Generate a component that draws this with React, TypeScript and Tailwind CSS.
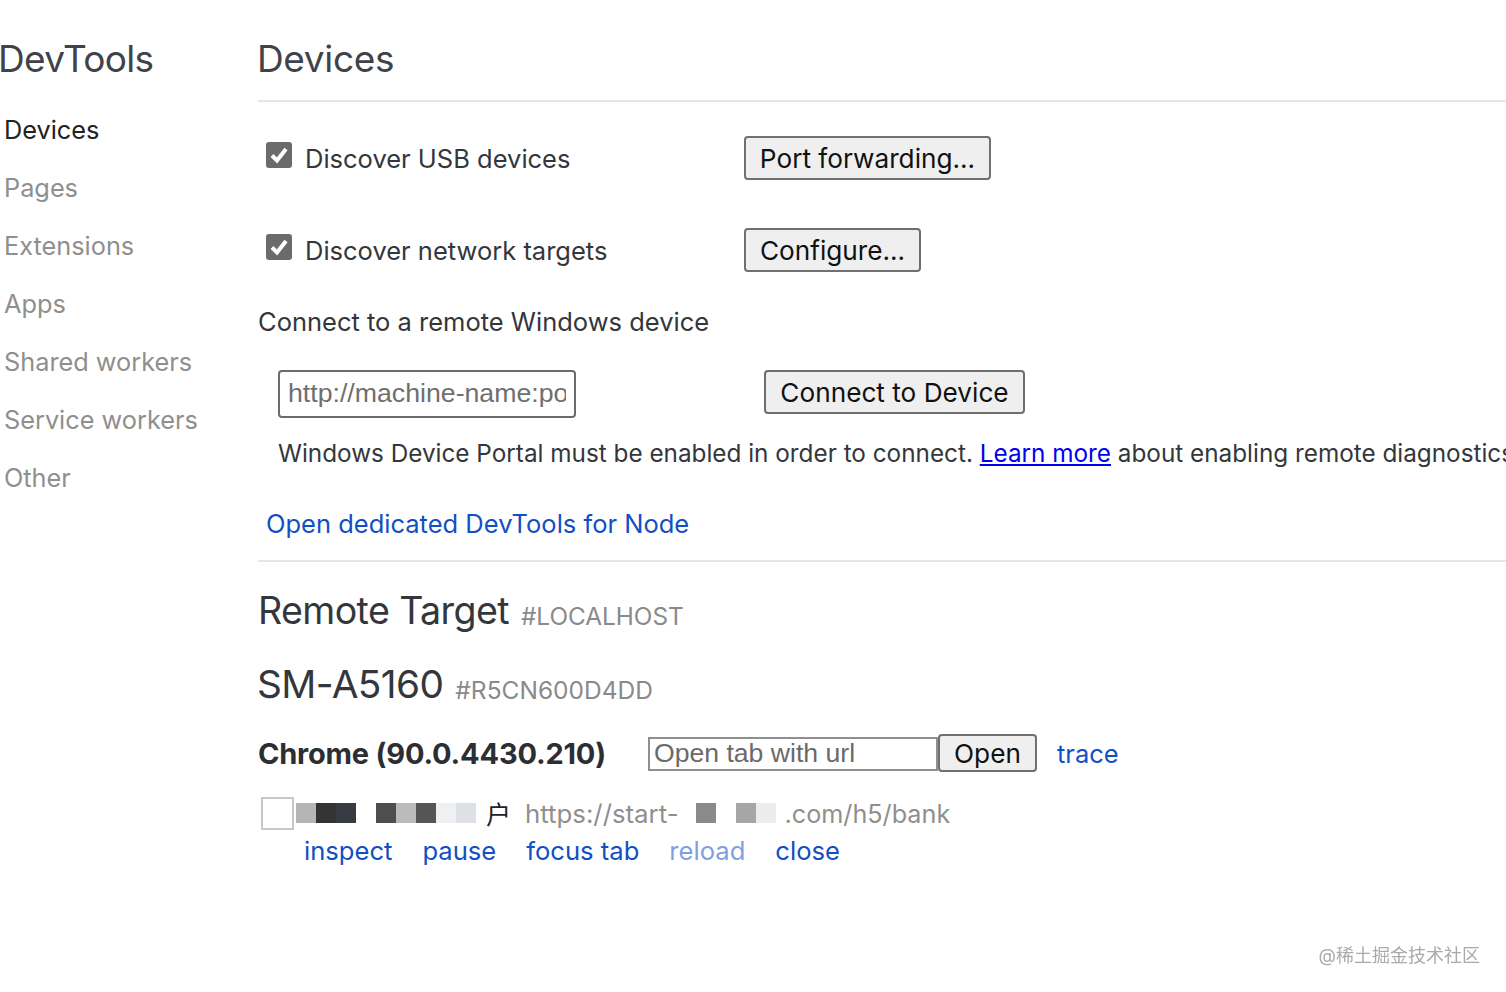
const font = "font-['Inter','Noto_Sans_CJK_SC',sans-serif]";

const navItems = ["Pages", "Extensions", "Apps", "Shared workers", "Service workers", "Other"];

function Sidebar() {
  return (
    <aside className="w-[258px] shrink-0">
      <h1 className="pt-[35px] h-[100px] text-[37px] leading-[48px] tracking-[-0.7px] text-[#3f4349] -ml-[2px]">DevTools</h1>
      <nav className="pl-[4px]">
        <div className="h-[58px] pt-[1px] text-[25.3px] leading-[58px] text-[#222]">Devices</div>
        {navItems.map((item) => (
          <div key={item} className="h-[58px] pt-[1px] text-[25.3px] leading-[58px] text-[#8f8f8f]">{item}</div>
        ))}
      </nav>
    </aside>
  );
}

function Button({ children, className }: { children: string; className: string }) {
  return (
    <button className={`h-[44px] pt-[3px] rounded-[4px] border-2 border-[#6f6f6f] bg-[#efefef] text-[26.2px] leading-none text-[#111] ${className}`}>
      {children}
    </button>
  );
}

function CheckRow({ label, button, btnWidth, className }: { label: string; button: string; btnWidth: string; className: string }) {
  return (
    <div className={`flex items-center ${className}`}>
      <div className="w-[486px] flex items-center pl-2">
        <span className="w-[26px] h-[26px] -mt-[6px] rounded-[3px] bg-[#6b6b6b] flex items-center justify-center">
          <svg width="20" height="20" viewBox="0 0 20 20" fill="none">
            <path d="M3 10.5 L8 15.5 L17 4" stroke="#fff" strokeWidth="4" />
          </svg>
        </span>
        <span className="ml-[13px] mt-[2px] text-[25.5px] text-[#33373c]">{label}</span>
      </div>
      <Button className={btnWidth}>{button}</Button>
    </div>
  );
}

function Blur({ className }: { className: string }) {
  return <span className={`inline-block h-[20px] w-[20px] blur-[0.6px] ${className}`} />;
}

function Main() {
  return (
    <main className="flex-1 min-w-0 overflow-hidden">
      <header className="h-[102px] border-b-2 border-[#e6e6e6] pt-[35px]">
        <h2 className="-ml-[1px] text-[37px] leading-[48px] tracking-[-0.35px] text-[#3f4349]">Devices</h2>
      </header>
      <CheckRow className="mt-[34px]" label="Discover USB devices" button="Port forwarding..." btnWidth="w-[247px]" />
      <CheckRow className="mt-[48px]" label="Discover network targets" button="Configure..." btnWidth="w-[177px]" />
      <div className="mt-[32px] h-[36px] text-[25.5px] leading-[36px] text-[#33373c]">Connect to a remote Windows device</div>
      <div className="mt-[30px] ml-[20px] flex items-start">
        <input
          readOnly
          placeholder="http://machine-name:port"
          className="w-[298px] h-[48px] rounded-[4px] border-2 border-[#6b6b6b] pl-2 pr-2 pb-[2px] text-[26.7px] font-['Liberation_Sans',sans-serif] placeholder:text-[#6f6f6f]"
        />
        <Button className="ml-[188px] w-[261px]">Connect to Device</Button>
      </div>
      <p className="mt-[17px] ml-[20px] h-[36px] whitespace-nowrap text-[24.3px] leading-[36px] text-[#33373c]">
        Windows Device Portal must be enabled in order to connect. <a className="text-[#0000ee] underline">Learn more</a> about enabling remote diagnostics.
      </p>
      <a className="block mt-[35px] ml-2 h-[36px] text-[25.5px] leading-[36px] text-[#1150c4]">Open dedicated DevTools for Node</a>
      <div className="mt-[18px] border-t-2 border-[#e6e6e6]" />
      <div className="mt-[24px] flex items-baseline h-[50px]">
        <h3 className="text-[37.6px] leading-[50px] tracking-[-0.6px] text-[#33373c]">Remote Target</h3>
        <span className="ml-3 translate-y-[1px] text-[24.3px] text-[#8a8a8a]">#LOCALHOST</span>
      </div>
      <div className="mt-[23px] flex items-baseline h-[50px]">
        <h3 className="-ml-[1px] text-[38.8px] leading-[50px] tracking-[-0.6px] text-[#33373c]">SM-A5160</h3>
        <span className="ml-3 translate-y-[1px] text-[24.5px] text-[#8a8a8a]">#R5CN600D4DD</span>
      </div>
      <div className="mt-[26px] flex items-center h-[38px]">
        <div className="w-[390px] text-[29px] font-bold text-[#2b2e33] tracking-[-0.2px]">Chrome (90.0.4430.210)</div>
        <input
          readOnly
          placeholder="Open tab with url"
          className="w-[290px] h-[34px] border-2 border-[#8f8f8f] pl-1 text-[26.6px] font-['Liberation_Sans',sans-serif] placeholder:text-[#6a6a6a]"
        />
        <Button className="w-[99px] !h-[38px] -translate-y-[1px]">Open</Button>
        <a className="ml-[20px] text-[25.5px] text-[#1150c4]">trace</a>
      </div>
      <div className="mt-[24px] ml-[3px] flex items-center h-[32px]">
        <span className="w-[33px] h-[33px] border-2 border-[#c8c8c8] bg-white" />
        <span className="ml-[2px] flex items-center">
          <Blur className="bg-[#b5b5b5]" />
          <Blur className="bg-[#333]" />
          <Blur className="bg-[#383c42]" />
          <Blur className="ml-[20px] bg-[#4c4e50]" />
          <Blur className="bg-[#bbb]" />
          <Blur className="bg-[#555]" />
          <Blur className="bg-[#eef0f2]" />
          <Blur className="bg-[#dde0e5]" />
        </span>
        <span className="ml-[10px] w-[26px] mt-[2px] text-[25px] text-[#222] font-['Noto_Sans_CJK_SC',sans-serif]">户</span>
        <span className="ml-[13px] mt-[2px] text-[25.8px] text-[#8f8f8f]">https://start-</span>
        <Blur className="ml-[17px] bg-[#8a8a8a]" />
        <Blur className="ml-[20px] bg-[#a6a6a6]" />
        <Blur className="bg-[#ececec]" />
        <span className="ml-[9px] mt-[3px] text-[25.2px] text-[#8f8f8f]">.com/h5/bank</span>
      </div>
      <div className="mt-[4px] ml-[46px] flex h-[36px] text-[25.6px] leading-[36px] text-[#1150c4]">
        <a>inspect</a>
        <a className="ml-[30px]">pause</a>
        <a className="ml-[30px]">focus tab</a>
        <a className="ml-[30px] text-[#7f9fe0]">reload</a>
        <a className="ml-[30px]">close</a>
      </div>
    </main>
  );
}

export default function App() {
  return (
    <div className={`relative flex h-[992px] w-[1506px] overflow-hidden bg-white ${font}`}>
      <Sidebar />
      <Main />
      <span className="absolute right-[26px] top-[942px] text-[18px] text-[#aaa] blur-[0.4px]">@稀土掘金技术社区</span>
    </div>
  );
}
